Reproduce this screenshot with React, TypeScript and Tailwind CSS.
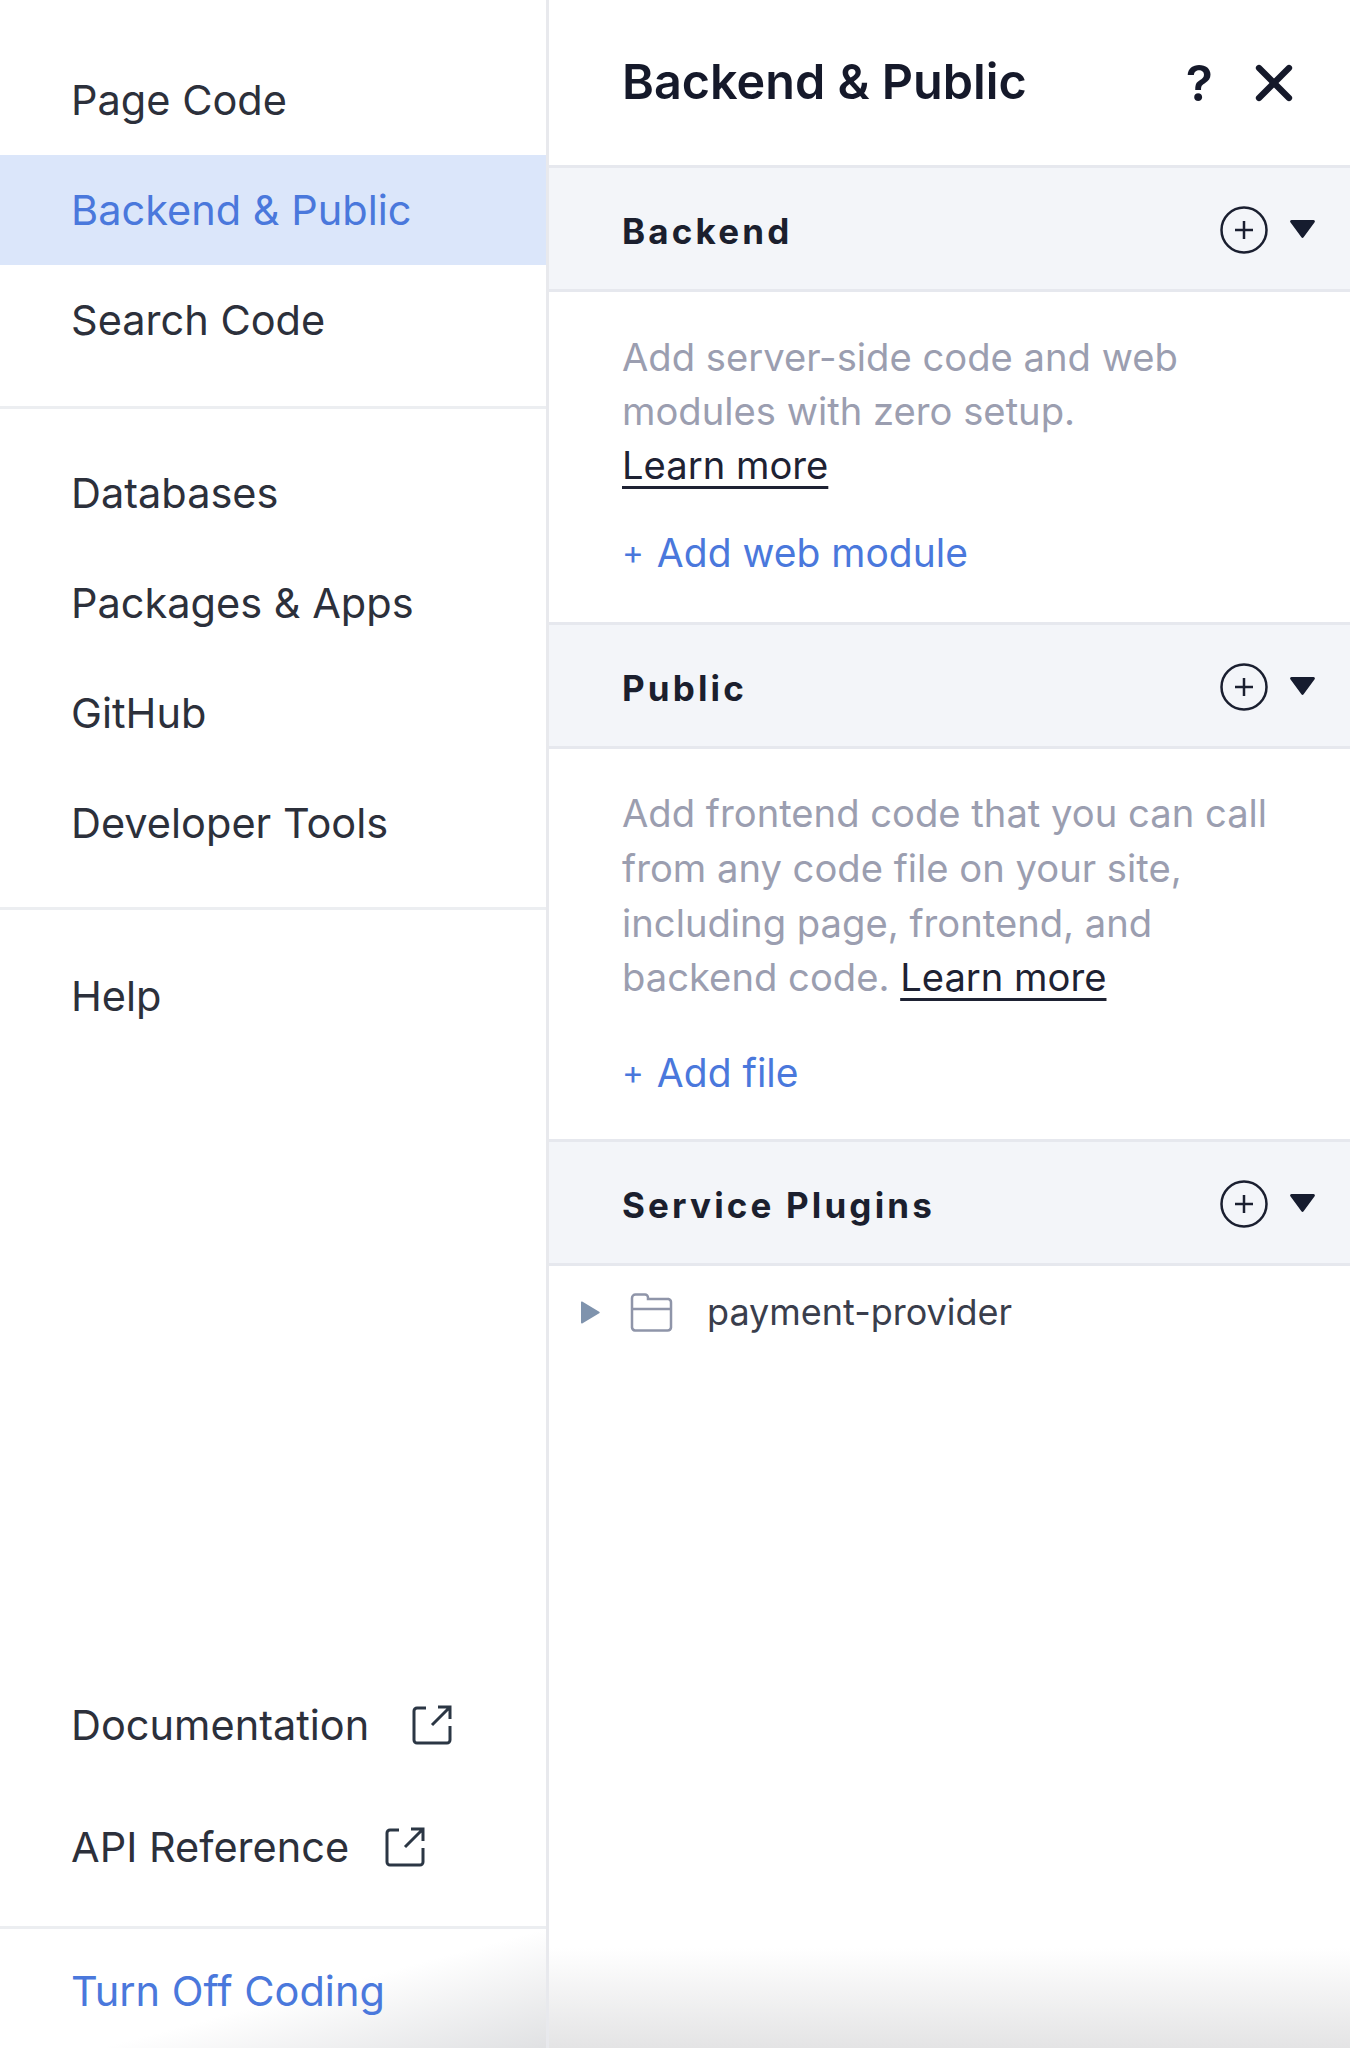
import { X } from "lucide-react";

const font = "font-['Inter',sans-serif]";

function NavRow({ label, active }: { label: string; active?: boolean }) {
  return (
    <div
      className={`flex h-[110px] items-center pl-[71px] text-[41.5px] ${
        active ? "bg-[#dbe6fa] text-[#4a78dc]" : "text-[#2c303b]"
      }`}
    >
      {label}
    </div>
  );
}

function ExternalIcon() {
  return (
    <svg
      viewBox="0 0 40 40"
      className="h-[40px] w-[40px]"
      fill="none"
      stroke="#2b3644"
      strokeWidth="3"
    >
      <path d="M14 3H5a3 3 0 0 0-3 3v29a3 3 0 0 0 3 3h30a3 3 0 0 0 3-3V21" />
      <path d="M20 20 37 3M26 2h12v12" />
    </svg>
  );
}

function LinkRow({ label, gap }: { label: string; gap: string }) {
  return (
    <div className={`flex h-[122px] items-center pl-[71px] text-[41.5px] text-[#2c303b] ${gap}`}>
      {label}
      <ExternalIcon />
    </div>
  );
}

function SectionHeader({ title }: { title: string }) {
  return (
    <div className="flex h-[127px] items-center justify-between border-y-[3px] border-[#e6e8ee] bg-[#f3f5f9] pl-[73px] pr-[35px]">
      <span className="pt-[6px] text-[35px] font-bold tracking-[0.09em] text-[#1b1f2e]">
        {title}
      </span>
      <div className="flex items-center gap-[22px] pt-[2px]">
        <svg viewBox="0 0 48 48" className="h-[48px] w-[48px]" fill="none" stroke="#1a1f30" strokeWidth="2.5">
          <circle cx="24" cy="24" r="22.500" />
          <path d="M24 15v18M15 24h18" />
        </svg>
        <svg viewBox="0 0 25 18" className="mb-[2px] h-[18px] w-[25px]" fill="#161c2f">
          <path d="M1.500 0h22a1.400 1.400 0 0 1 1.100 2.200l-11 15a1.400 1.400 0 0 1-2.200 0l-11-15A1.400 1.400 0 0 1 1.500 0Z" />
        </svg>
      </div>
    </div>
  );
}

function LearnMore() {
  return (
    <span className="text-[#1e2233] underline decoration-[3px] underline-offset-[7px]">
      Learn more
    </span>
  );
}

function AddLink({ label }: { label: string }) {
  return (
    <div className="flex items-center gap-[13px] text-[39px] leading-[55px] text-[#4a78dc]">
      <span className="text-[33px]">+</span>
      {label}
    </div>
  );
}

export default function App() {
  return (
    <div className={`flex h-[2048px] w-[1350px] overflow-hidden bg-white ${font}`}>
      <aside className="flex w-[549px] shrink-0 flex-col border-r-[3px] border-[#e8e9ed]">
        <div className="border-b-[3px] border-[#eceef1] pb-[31px] pt-[45px]">
          <NavRow label="Page Code" />
          <NavRow label="Backend & Public" active />
          <NavRow label="Search Code" />
        </div>
        <div className="border-b-[3px] border-[#eceef1] pb-[29px] pt-[29px]">
          <NavRow label="Databases" />
          <NavRow label="Packages & Apps" />
          <NavRow label="GitHub" />
          <NavRow label="Developer Tools" />
        </div>
        <div className="pt-[31px]">
          <NavRow label="Help" />
        </div>
        <div className="mt-auto pb-[18px]">
          <LinkRow label="Documentation" gap="gap-[43px]" />
          <LinkRow label="API Reference" gap="gap-[36px]" />
        </div>
        <div className="flex h-[122px] items-center border-t-[3px] border-[#eceef1] bg-[linear-gradient(165deg,#fff_55%,#e0e1e3_100%)] pl-[71px] pt-[6px] text-[41.5px] text-[#4a78dc]">
          Turn Off Coding
        </div>
      </aside>

      <main className="flex min-w-0 flex-1 flex-col">
        <header className="flex h-[165px] shrink-0 items-center justify-between pl-[73px] pr-[46px]">
          <h1 className="text-[48.500px] font-semibold text-[#15192a]">Backend &amp; Public</h1>
          <div className="flex items-center gap-[31px] text-[#15192a]">
            <span className="text-[50px] font-semibold leading-none">?</span>
            <X className="h-[60px] w-[60px]" strokeWidth={2.5} />
          </div>
        </header>

        <SectionHeader title="Backend" />
        <div className="pb-[42px] pl-[73px] pr-[40px] pt-[38px] text-[38.200px] leading-[54px] text-[#9b9eb0]">
          <p>Add server-side code and web</p>
          <p>modules with zero setup.</p>
          <LearnMore />
          <div className="mt-[33px]">
            <AddLink label="Add web module" />
          </div>
        </div>

        <SectionHeader title="Public" />
        <div className="pb-[39px] pl-[73px] pr-[40px] pt-[37px] text-[38.200px] leading-[54.800px] text-[#9b9eb0]">
          <p>Add frontend code that you can call</p>
          <p>from any code file on your site,</p>
          <p>including page, frontend, and</p>
          <p>
            backend code. <LearnMore />
          </p>
          <div className="mt-[40px]">
            <AddLink label="Add file" />
          </div>
        </div>

        <SectionHeader title="Service Plugins" />
        <div className="flex items-center pl-[32px] pt-[19px]">
          <svg viewBox="0 0 19 23" className="h-[23px] w-[19px]" fill="#7f93ad">
            <path d="M0 1.500A1 1 0 0 1 1.600.7l16.600 10a1 1 0 0 1 0 1.600L1.600 22.300A1 1 0 0 1 0 21.500Z" />
          </svg>
          <svg viewBox="0 0 43 39" className="ml-[30px] h-[39px] w-[43px]" fill="none" stroke="#8f95a9" strokeWidth="2.500">
            <path d="M2 14V5a3.500 3.500 0 0 1 3.500-3.500H15a3 3 0 0 1 3 3V6h20.500A3.500 3.500 0 0 1 41 9.500v25a3.500 3.500 0 0 1-3.500 3H5a3.500 3.500 0 0 1-3-3ZM2 16h39" />
          </svg>
          <span className="ml-[34px] text-[36px] text-[#3a3e4c]">payment-provider</span>
        </div>

        {/* shadow at the bottom edge of the capture */}
        <div className="mt-auto h-[100px] bg-gradient-to-b from-white to-[#e4e4e5]" />
      </main>
    </div>
  );
}
